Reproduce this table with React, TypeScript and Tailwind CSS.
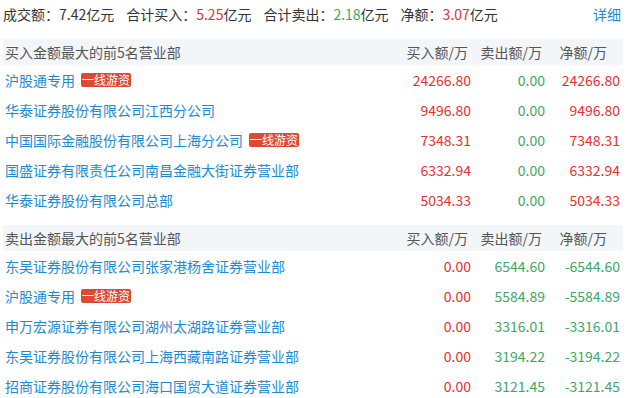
import React from 'react'

interface Row {
  name: string
  tag?: boolean
  buy: string
  sell: string
  net: string
}

const BUY_ROWS: Row[] = [
  { name: '沪股通专用', tag: true, buy: '24266.80', sell: '0.00', net: '24266.80' },
  { name: '华泰证券股份有限公司江西分公司', buy: '9496.80', sell: '0.00', net: '9496.80' },
  { name: '中国国际金融股份有限公司上海分公司', tag: true, buy: '7348.31', sell: '0.00', net: '7348.31' },
  { name: '国盛证券有限责任公司南昌金融大街证券营业部', buy: '6332.94', sell: '0.00', net: '6332.94' },
  { name: '华泰证券股份有限公司总部', buy: '5034.33', sell: '0.00', net: '5034.33' },
]

const SELL_ROWS: Row[] = [
  { name: '东吴证券股份有限公司张家港杨舍证券营业部', buy: '0.00', sell: '6544.60', net: '-6544.60' },
  { name: '沪股通专用', tag: true, buy: '0.00', sell: '5584.89', net: '-5584.89' },
  { name: '申万宏源证券有限公司湖州太湖路证券营业部', buy: '0.00', sell: '3316.01', net: '-3316.01' },
  { name: '东吴证券股份有限公司上海西藏南路证券营业部', buy: '0.00', sell: '3194.22', net: '-3194.22' },
  { name: '招商证券股份有限公司海口国贸大道证券营业部', buy: '0.00', sell: '3121.45', net: '-3121.45' },
]

const FONT = { fontFamily: '"Microsoft YaHei", "Noto Sans CJK SC", "Noto Sans", sans-serif' }

function Section({ title, rows, positive }: { title: string; rows: Row[]; positive: boolean }) {
  const netColor = positive ? 'text-[#e93030]' : 'text-[#3fa66a]'
  return (
    <div>
      {/* header band */}
      <div className="flex items-center h-[26px] ml-[3px] mr-[5px] bg-[#f3f6f9] text-[#555] text-[14px]">
        <div className="flex-1 pl-[2px]">{title}</div>
        <div className="w-[80px] text-right pr-[5px]">买入额/万</div>
        <div className="w-[75px] text-right pr-[6px]">卖出额/万</div>
        <div className="w-[75px] text-right pr-[16px]">净额/万</div>
      </div>
      {rows.map((r, i) => (
        <div key={i} className="flex items-center h-[30px] ml-[3px] mr-[5px] text-[14px]">
          <div className="flex-1 pl-[2px] flex items-center gap-[6px] text-[#1e8ad2]">
            <span>{r.name}</span>
            {r.tag && (
              <span className="bg-[#dc4a33] text-white text-[12px] leading-[14px] px-[1px] rounded-[2px]">
                一线游资
              </span>
            )}
          </div>
          <div className="w-[80px] text-right pr-[2px] text-[#e93030]">{r.buy}</div>
          <div className="w-[75px] text-right pr-[3px] text-[#3fa66a]">{r.sell}</div>
          <div className={`w-[75px] text-right pr-[3px] ${netColor}`}>{r.net}</div>
        </div>
      ))}
    </div>
  )
}

export default function App() {
  return (
    <div className="w-[628px] h-[398px] bg-white overflow-hidden" style={FONT}>
      {/* summary */}
      <div className="flex items-center h-[28px] pl-[3px] pr-[7px] text-[14px] text-[#333]">
        <div className="flex items-center gap-[12px] flex-1">
          <span>成交额：7.42亿元</span>
          <span>
            合计买入：<span className="text-[#e93030]">5.25</span>亿元
          </span>
          <span>
            合计卖出：<span className="text-[#3fa66a]">2.18</span>亿元
          </span>
          <span>
            净额：<span className="text-[#e93030]">3.07</span>亿元
          </span>
        </div>
        <span className="text-[#1e8ad2]">详细</span>
      </div>

      <div className="mt-[11px]">
        <Section title="买入金额最大的前5名营业部" rows={BUY_ROWS} positive />
      </div>
      <div className="mt-[10px]">
        <Section title="卖出金额最大的前5名营业部" rows={SELL_ROWS} positive={false} />
      </div>
    </div>
  )
}
